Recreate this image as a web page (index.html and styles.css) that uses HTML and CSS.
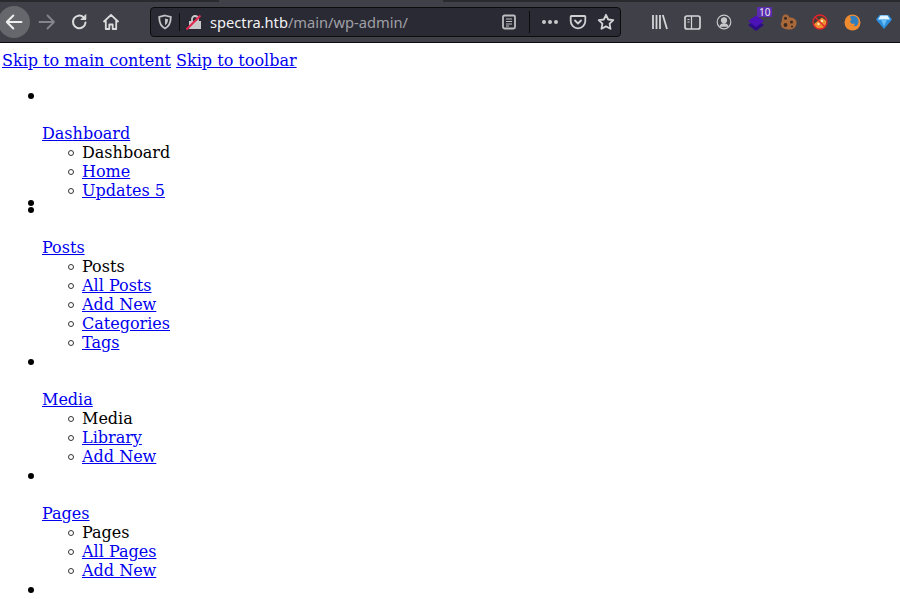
FILE: index.html
```html
<!DOCTYPE html>
<html lang="en">
<head>
<meta charset="utf-8">
<title>spectra.htb/main/wp-admin/</title>
<link rel="stylesheet" href="styles.css">
</head>
<body>
<header class="toolbar">
  <div class="tabstrip"><div class="tab-rest left"></div><div class="tab-active"></div><div class="tab-rest"></div></div>
  <nav class="nav">
    <div class="nav-left">
      <span class="btn-back">
        <svg width="20" height="20" viewBox="0 0 20 20" fill="none" stroke="#eeeeef" stroke-width="2" stroke-linecap="round" stroke-linejoin="round"><path d="M17.500 10H2.800M9.300 3.500L2.800 10l6.500 6.500"/></svg>
      </span>
      <span class="btn">
        <svg width="18" height="18" viewBox="0 0 18 18" fill="none" stroke="#85868b" stroke-width="1.800" stroke-linecap="round" stroke-linejoin="round"><path d="M1.500 9h14.500M9.500 2.500L16 9l-6.500 6.500"/></svg>
      </span>
      <span class="btn">
        <svg width="18" height="18" viewBox="0 0 18 18" fill="none" stroke="#dcdcde" stroke-width="2" stroke-linecap="round" stroke-linejoin="round"><path d="M15.500 9.500a6.300 6.300 0 1 1-2-5.200L15 5.700"/><path d="M15.800 2V6.500H11.300z" fill="#dcdcde" stroke-width="1"/></svg>
      </span>
      <span class="btn">
        <svg width="18" height="18" viewBox="0 0 18 18" fill="none" stroke="#dcdcde" stroke-width="1.800" stroke-linejoin="round"><path d="M1.500 9L9 1.800 16.500 9M3.800 7.500V16h3.500v-4.500h3.400V16h3.500V7.500"/></svg>
      </span>
    </div>
    <div class="urlbar">
      <svg class="shield" width="16" height="16" viewBox="0 0 16 16" fill="none" stroke="#c4c4c8" stroke-width="1.800"><path d="M8 1.500l5.800 1.500c0 5-1 9-5.800 11.500C3.200 12 2.200 8 2.200 3z"/><path d="M8 4.500l3 .8c0 2.500-.6 4.500-3 6z" fill="#c4c4c8" stroke="none"/></svg>
      <span class="sep"></span>
      <svg class="lock" width="16" height="16" viewBox="0 0 16 16"><path d="M3 7h12v8H3z" fill="#c9c9cc"/><path d="M6 7V5a3 3 0 0 1 6 0v2" fill="none" stroke="#c9c9cc" stroke-width="1.800"/><path d="M.5 15.500L14.500 1.500" stroke="#e22850" stroke-width="2"/></svg>
      <span class="url"><span class="host">spectra.htb</span><span class="path">/main/wp-admin/</span></span>
      <svg class="reader" width="16" height="16" viewBox="0 0 16 16" fill="none" stroke="#bdbdc1"><rect x="2" y="1.500" width="12" height="13" rx="1.500" stroke-width="1.800"/><path d="M5 5h6M5 7.500h6M5 10h6M5 12h3" stroke-width="1"/></svg>
      <span class="sep tall"></span>
      <span class="dots"><i></i><i></i><i></i></span>
      <svg class="pocket" width="18" height="18" viewBox="0 0 18 18" fill="none" stroke="#d0d0d3" stroke-width="1.800" stroke-linecap="round" stroke-linejoin="round"><path d="M2.500 3h13a.8.8 0 0 1 .8.800V8a7.300 7.300 0 0 1-14.600 0V3.800a.8.8 0 0 1 .8-.8z"/><path d="M6 7.500l3 3 3-3"/></svg>
      <svg class="star" width="18" height="18" viewBox="0 0 18 18" fill="none" stroke="#d4d4d7" stroke-width="1.800" stroke-linejoin="round"><path d="M9 1.800l2.200 4.700 5.100.7-3.700 3.500.9 5.100L9 13.400l-4.500 2.400.9-5.100-3.700-3.500 5.100-.7z"/></svg>
    </div>
    <div class="extensions">
      <span class="ext"><svg width="18" height="16" viewBox="0 0 18 16" fill="none" stroke="#d4d4d7" stroke-width="1.800"><path d="M2 1V15M5.500 1V15M9 1V15M11.800 1L16 15"/></svg></span>
      <span class="ext"><svg width="17" height="15" viewBox="0 0 17 15" fill="none" stroke="#d4d4d7" stroke-width="1.700"><rect x="1" y="1" width="15" height="13" rx="2"/><path d="M7.500 1v13M3.500 4.500h2M3.500 7h2" stroke-width="1.200"/></svg></span>
      <span class="ext"><svg width="16" height="16" viewBox="0 0 16 16" fill="none" stroke="#c8c8cb" stroke-width="1.200"><circle cx="8" cy="8" r="6.800"/><circle cx="8" cy="6.300" r="2.500" fill="#c8c8cb"/><path d="M3.800 12.800c.8-2.300 2.300-3 4.200-3s3.400.7 4.200 3" fill="#c8c8cb"/></svg></span>
      <span class="ext">
        <span class="stack">
          <svg width="18" height="18" viewBox="0 0 18 18"><path d="M9 7l8 5-8 6-8-6z" fill="#2d0d86"/><path d="M9 2.500l8 5.500-8 6-8-6z" fill="#4b12b8"/></svg>
          <span class="badge">10</span>
        </span>
      </span>
      <span class="ext"><svg width="17" height="16" viewBox="0 0 17 16"><path d="M5 .5c2.500-.5 4 1 4.300 3 2.500-.5 6 .8 7 3.500.8 3-.5 7-3.800 8-3 1-7 .5-9.500-1C.5 12.500.2 9.500 1.800 7.500 2 5 2.200 1 5 .5z" fill="#a9683a"/><circle cx="5.500" cy="4.300" r="1.500" fill="#3a2a20"/><circle cx="5.500" cy="11" r="1.900" fill="#3a2a20"/><circle cx="11.500" cy="8" r="1.500" fill="#3a2a20"/><circle cx="12" cy="12.500" r="1" fill="#3a2a20"/></svg></span>
      <span class="ext"><svg width="16" height="16" viewBox="0 0 16 16"><circle cx="8" cy="8" r="7" fill="#4a3a33"/><path d="M1.500 10.500L10 3.500l4.500 3.500-1.500 6.500-3 1.500H5z" fill="#ee9030"/><circle cx="6.500" cy="10" r="1.200" fill="#fde6b8"/><circle cx="10" cy="7" r="1.200" fill="#fde6b8"/><circle cx="8" cy="8" r="7" fill="none" stroke="#e0242c" stroke-width="1.300"/><path d="M3 3l10 10" stroke="#e0242c" stroke-width="1.300"/></svg></span>
      <span class="ext"><svg width="17" height="17" viewBox="0 0 17 17"><circle cx="8.500" cy="8.500" r="8" fill="#ee8a2f"/><path d="M6 2.500c2.500-1.500 6.500-.5 8 2.500 1 2.300.5 5-1 6.500-1 .8-2.500 1-3.500.5 1-.5 1.500-1.500 1.200-2.500-1.700.8-3.700.2-4.300-1.200C5.800 7 6.500 6.200 7.500 6 6.800 5 6.200 3.800 6 2.500z" fill="#2f7fc0"/></svg></span>
      <span class="ext"><svg width="16" height="16" viewBox="0 0 16 16"><path d="M3.500 1h9L16 5.500 8 15 0 5.500z" fill="#2b8fe0"/><path d="M4.500 1.500h7L14 5.500H2z" fill="#e2f4ff"/><path d="M5 5.500h6L8 12.500z" fill="#6cbdf2"/></svg></span>
    </div>
  </nav>
</header>
<main class="page">
  <p class="skip"><a href="#main">Skip to main content</a> <a href="#toolbar">Skip to toolbar</a></p>
  <ul class="menu">
    <li>
      <div class="menu-image"></div>
      <a href="#dashboard">Dashboard</a>
      <ul class="submenu">
        <li>Dashboard</li>
        <li><a href="#home">Home</a></li>
        <li><a href="#updates">Updates 5</a></li>
      </ul>
    </li>
    <li class="separator"></li>
    <li>
      <div class="menu-image"></div>
      <a href="#posts">Posts</a>
      <ul class="submenu">
        <li>Posts</li>
        <li><a href="#all-posts">All Posts</a></li>
        <li><a href="#new-post">Add New</a></li>
        <li><a href="#categories">Categories</a></li>
        <li><a href="#tags">Tags</a></li>
      </ul>
    </li>
    <li>
      <div class="menu-image"></div>
      <a href="#media">Media</a>
      <ul class="submenu">
        <li>Media</li>
        <li><a href="#library">Library</a></li>
        <li><a href="#new-media">Add New</a></li>
      </ul>
    </li>
    <li>
      <div class="menu-image"></div>
      <a href="#pages">Pages</a>
      <ul class="submenu">
        <li>Pages</li>
        <li><a href="#all-pages">All Pages</a></li>
        <li><a href="#new-page">Add New</a></li>
      </ul>
    </li>
    <li>
      <div class="menu-image"></div>
    </li>
  </ul>
</main>
</body>
</html>
```
FILE: styles.css
```css
html, body {
  margin: 0;
  padding: 0;
  height: 100%;
  overflow: hidden;
  background: #fff;
}
body {
  font-family: "DejaVu Serif", serif;
  font-size: 16px;
  line-height: 19px;
  color: #000;
}
.toolbar {
  height: 43px;
  background: #404148;
  border-bottom: 1px solid #0c0c0d;
  box-sizing: border-box;
}
.tabstrip {
  height: 2px;
  display: flex;
}
.tab-rest {
  flex: 1;
  background: #2a2a2e;
}
.tab-active {
  width: 224px;
}
.tab-rest.left {
  flex: none;
  width: 219px;
}
.nav {
  display: flex;
  align-items: center;
  height: 40px;
}
.nav-left {
  display: flex;
  align-items: center;
  width: 150px;
  flex: none;
}
.btn-back {
  width: 32px;
  height: 32px;
  margin-left: -2px;
  margin-right: 1px;
  border-radius: 50%;
  background: #66676c;
  display: flex;
  align-items: center;
  justify-content: center;
  flex: none;
}
.btn {
  width: 32px;
  display: flex;
  justify-content: center;
  flex: none;
}
.urlbar {
  width: 471px;
  height: 30px;
  flex: none;
  display: flex;
  align-items: center;
  background: #2a2a35;
  border: 1px solid #0c0c0d;
  border-radius: 4px;
  box-sizing: border-box;
}
.urlbar svg { flex: none; }
.shield { margin-left: 6px; }
.sep {
  width: 1px;
  height: 18px;
  background: #0c0c0d;
  margin-left: 6px;
  flex: none;
}
.lock { margin-left: 6px; }
.url {
  flex: 1;
  margin-left: 8px;
  font-family: "Noto Sans", sans-serif;
  font-size: 14.67px;
  white-space: nowrap;
}
.host { color: #f2f2f3; }
.path { color: #a0a0a6; }
.reader { margin-right: 12px; }
.sep.tall {
  height: 22px;
  margin-left: 0;
  margin-right: 12px;
}
.dots {
  display: flex;
  gap: 2px;
  margin-right: 11px;
}
.dots i {
  width: 4px;
  height: 4px;
  border-radius: 50%;
  background: #c8c8cb;
}
.pocket { margin-right: 10px; }
.star { margin-right: 5px; }
.extensions {
  flex: 1;
  display: flex;
  align-items: center;
  padding-left: 23px;
}
.ext {
  width: 32px;
  flex: none;
  display: flex;
  justify-content: center;
  align-items: center;
}
.stack {
  display: block;
  width: 18px;
  height: 18px;
  position: relative;
}
.badge {
  position: absolute;
  top: -6px;
  left: 10px;
  background: #5b2cb0;
  color: #e8e8ee;
  font-family: "Noto Sans", sans-serif;
  font-size: 10px;
  line-height: 10px;
  padding: 0 2px;
  border-radius: 1px;
}
.page {
  padding: 0 2px;
}
.skip {
  margin: 8px 0 0;
  white-space: nowrap;
}
.menu {
  margin: 16px 0;
  padding-left: 40px;
  list-style: none;
}
.submenu {
  margin: 0;
  padding-left: 40px;
  list-style: none;
}
.menu li {
  position: relative;
}
.menu li::before {
  content: "";
  position: absolute;
  left: -14px;
  top: 7px;
  width: 6px;
  height: 6px;
  border-radius: 50%;
  background: #000;
}
.menu .submenu li::before {
  box-sizing: border-box;
  background: transparent;
  border: 1px solid #333;
}
.menu .separator {
  height: 0;
}
.menu .separator::before {
  top: 0;
}
.menu-image {
  height: 38px;
}
a { color: #00e; }
```
